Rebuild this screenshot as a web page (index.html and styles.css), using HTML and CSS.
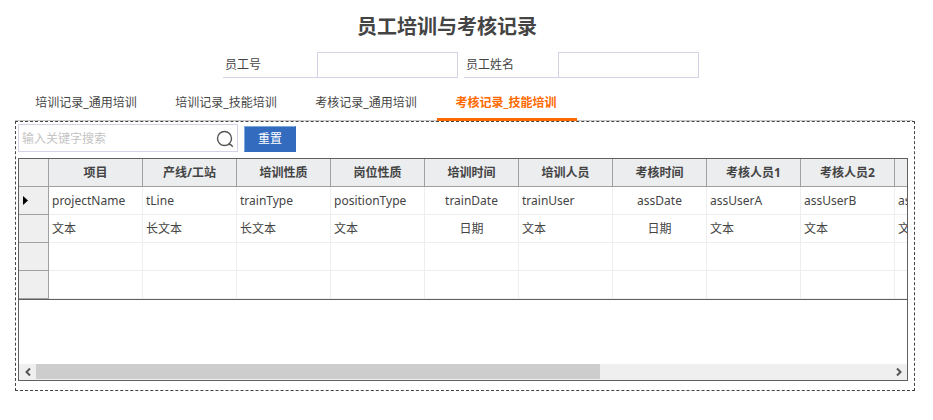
FILE: index.html
```html
<!DOCTYPE html>
<html lang="zh-CN">
<head>
<meta charset="utf-8">
<title>员工培训与考核记录</title>
<link rel="stylesheet" href="styles.css">
</head>
<body>
<main class="page">
  <h1 class="title">员工培训与考核记录</h1>
  <form class="filters">
    <div class="field">
      <label class="field-label" for="emp-no">员工号</label>
      <input class="field-input" id="emp-no" type="text">
    </div>
    <div class="field">
      <label class="field-label" for="emp-name">员工姓名</label>
      <input class="field-input" id="emp-name" type="text">
    </div>
  </form>
  <nav class="tabs">
    <button class="tab" type="button">培训记录_通用培训</button>
    <button class="tab" type="button">培训记录_技能培训</button>
    <button class="tab" type="button">考核记录_通用培训</button>
    <button class="tab tab-active" type="button">考核记录_技能培训</button>
  </nav>
  <section class="panel">
    <div class="toolbar">
      <div class="search">
        <input class="search-input" type="text" placeholder="输入关键字搜索" aria-label="输入关键字搜索">
        <svg class="search-icon" viewBox="0 0 18 18" width="18" height="18" aria-hidden="true">
          <circle cx="8.5" cy="8.5" r="7" />
          <path d="M12.5 14.5 H14.5 L16.8 16.8" />
        </svg>
      </div>
      <button class="reset" type="button">重置</button>
    </div>
    <div class="grid">
      <div class="grid-view">
        <table class="records">
          <colgroup>
            <col class="col-mark"><col><col><col><col><col><col><col><col><col><col>
          </colgroup>
          <thead>
            <tr>
              <td class="mark"></td>
              <th>项目</th><th>产线/工站</th><th>培训性质</th><th>岗位性质</th><th>培训时间</th><th>培训人员</th><th>考核时间</th><th>考核人员1</th><th>考核人员2</th><th></th>
            </tr>
          </thead>
          <tbody>
            <tr>
              <td class="mark"><svg class="pointer" viewBox="0 0 5 9" width="5" height="9" aria-hidden="true"><path d="M0 0 L5 4.5 L0 9 Z" /></svg></td>
              <td>projectName</td><td>tLine</td><td>trainType</td><td>positionType</td><td class="date">trainDate</td><td>trainUser</td><td class="date">assDate</td><td>assUserA</td><td>assUserB</td><td>ass</td>
            </tr>
            <tr>
              <td class="mark"></td>
              <td>文本</td><td>长文本</td><td>长文本</td><td>文本</td><td class="date">日期</td><td>文本</td><td class="date">日期</td><td>文本</td><td>文本</td><td>文</td>
            </tr>
            <tr>
              <td class="mark"></td>
              <td></td><td></td><td></td><td></td><td></td><td></td><td></td><td></td><td></td><td></td>
            </tr>
            <tr>
              <td class="mark"></td>
              <td></td><td></td><td></td><td></td><td></td><td></td><td></td><td></td><td></td><td></td>
            </tr>
          </tbody>
        </table>
      </div>
      <div class="scrollbar">
        <button class="arrow" type="button" aria-label="向左滚动"><svg viewBox="0 0 6 8" width="6" height="8"><path d="M5 0.5 L1.5 4 L5 7.5" /></svg></button>
        <div class="track"><div class="thumb"></div></div>
        <button class="arrow" type="button" aria-label="向右滚动"><svg viewBox="0 0 6 8" width="6" height="8"><path d="M1 0.5 L4.5 4 L1 7.5" /></svg></button>
      </div>
    </div>
  </section>
</main>
</body>
</html>
```

FILE: styles.css
```css
* {
  box-sizing: border-box;
}

body {
  margin: 0;
  background: #fff;
  color: #444;
  font-family: "Noto Sans", "Noto Sans CJK SC", sans-serif;
  font-size: 12px;
  line-height: 18px;
}

button,
input {
  font: inherit;
  color: inherit;
  border-radius: 0;
}

.page {
  padding: 12px 18px 0 15px;
}

.title {
  margin: 0;
  padding-right: 36px;
  font-size: 20px;
  line-height: 30px;
  font-weight: 700;
  text-align: center;
}

.filters {
  display: flex;
  justify-content: center;
  gap: 6px;
  margin-top: 10px;
  padding-right: 8px;
}

.field {
  display: flex;
  height: 26px;
}

.field-label {
  width: 94px;
  padding: 4px 2px 3px;
  border-bottom: 1px solid #d5d2e8;
}

.field-input {
  width: 141px;
  padding: 0 4px;
  border: 1px solid #d5d2e8;
  background: #fff;
}

.tabs {
  display: flex;
  height: 43px;
  margin-right: 2px;
  padding: 8px 0 0 2px;
  border-bottom: 1px solid #c8c8c8;
}

.tab {
  width: 140px;
  height: 35px;
  padding: 2px 2px 0 0;
  border: 0;
  border-bottom: 3px solid transparent;
  background: none;
}

.tab-active {
  border-bottom-color: #ff6a00;
  color: #ff6a00;
  font-weight: 700;
}

.panel {
  padding: 2px 6px 9px 2px;
  border: 1px dashed #444;
}

.toolbar {
  display: flex;
  align-items: flex-end;
  gap: 6px;
}

.search {
  display: flex;
  align-items: center;
  width: 220px;
  height: 28px;
  padding: 2px 3px 0 3px;
  border: 1px solid #d5d2e8;
}

.search-input {
  flex: 1;
  min-width: 0;
  padding: 0;
  border: 0;
  outline: 0;
  background: none;
}

.search-input::placeholder {
  color: #c4c4c4;
  opacity: 1;
}

.search-icon {
  fill: none;
  stroke: #555;
  stroke-width: 1.4;
}

.reset {
  width: 52px;
  height: 26px;
  padding: 0;
  border: 1px solid #336bbf;
  border-top-color: #7fa8dc;
  border-left-color: #7fa8dc;
  background: #336bbf;
  color: #fff;
}

.grid {
  margin-top: 6px;
  border: 1px solid #606060;
}

.grid-view {
  height: 205px;
  overflow: hidden;
}

.records {
  width: 970px;
  table-layout: fixed;
  border-collapse: separate;
  border-spacing: 0;
  border-bottom: 1px solid #606060;
}

.col-mark {
  width: 30px;
}

.records th,
.records td {
  height: 28px;
  padding: 0 3px;
  border-right: 1px solid #eee;
  border-bottom: 1px solid #eee;
  text-align: left;
  white-space: nowrap;
}

.records th {
  border-color: #a0a0a0;
  background: #ebedef;
  font-weight: 700;
  text-align: center;
}

.records .mark {
  border-color: #a0a0a0;
  background: #efefef;
}

.records .date {
  text-align: center;
}

.pointer {
  display: block;
  margin-left: 1px;
  fill: #000;
}

.scrollbar {
  display: flex;
  height: 16px;
  background: #efefef;
}

.arrow {
  display: flex;
  align-items: center;
  justify-content: center;
  width: 17px;
  padding: 0;
  border: 0;
  background: none;
}

.arrow path {
  fill: none;
  stroke: #555;
  stroke-width: 2;
}

.track {
  flex: 1;
}

.thumb {
  width: 66%;
  height: 15px;
  background: #cdcdcd;
}
```
